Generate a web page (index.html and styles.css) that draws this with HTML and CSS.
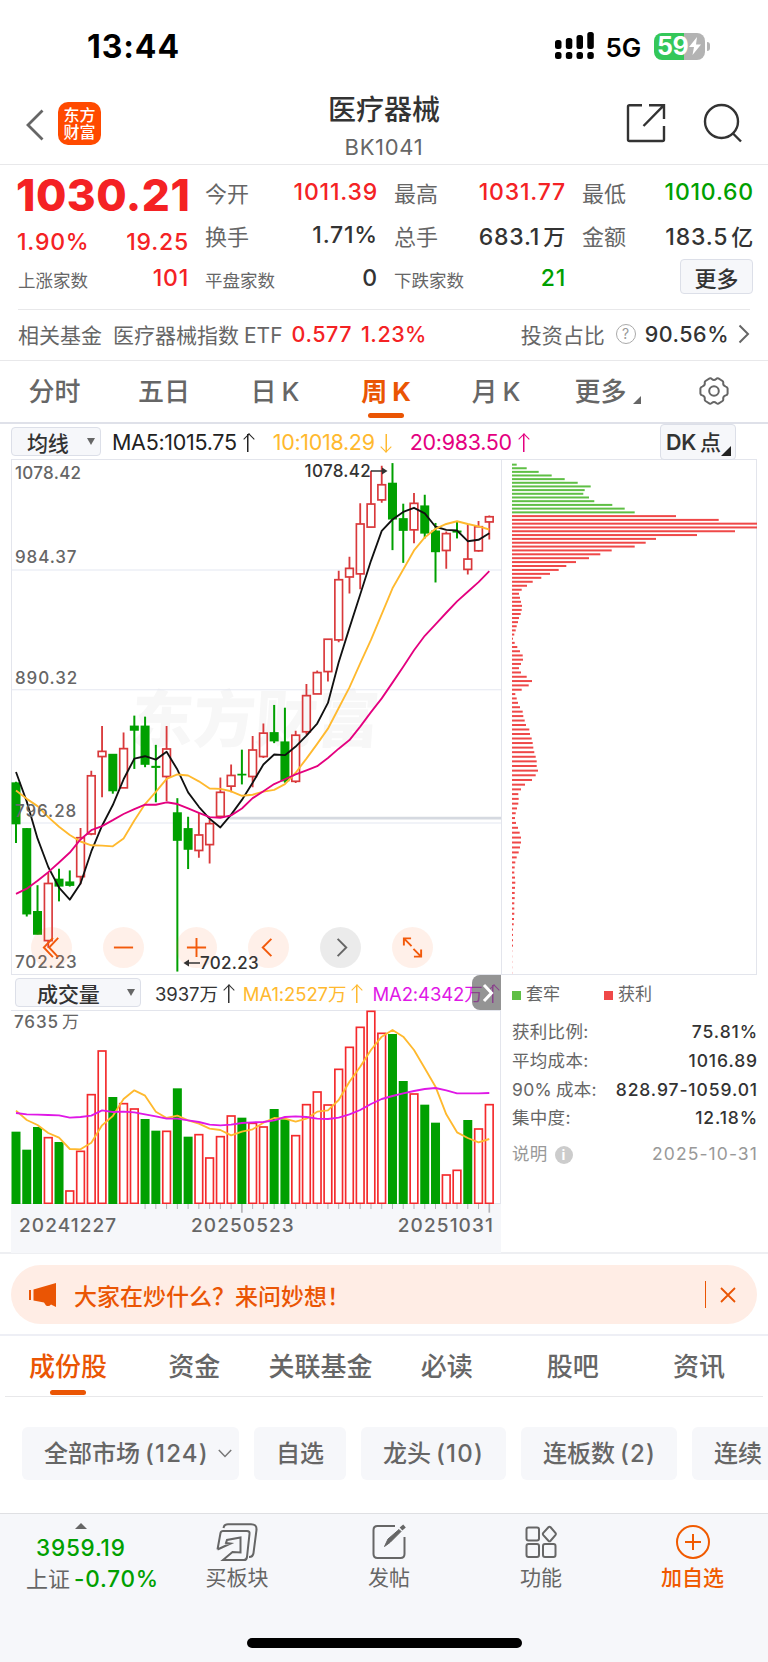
FILE: index.html
```html
<!DOCTYPE html>
<html lang="zh-CN">
<head>
    <meta charset="UTF-8">
    <meta name="viewport" content="width=device-width, initial-scale=1.0">
    <title>医疗器械 BK1041</title>
    <link rel="stylesheet" href="styles.css">
</head>
<body>
    <div class="status-bar">
        <span class="time">13:44</span>
        <div class="status-right">
            <svg class="signal" width="40" height="28" viewBox="0 0 40 28">
                <g fill="#000">
                    <rect x="0" y="8" width="6.500" height="9" rx="2.500"/>
                    <rect x="10.800" y="6" width="6.500" height="11" rx="2.500"/>
                    <rect x="21.500" y="3" width="6.500" height="14" rx="2.500"/>
                    <rect x="32.300" y="0" width="6.500" height="17" rx="2.500"/>
                    <rect x="0" y="20" width="6.500" height="7" rx="2.500"/>
                    <rect x="10.800" y="20" width="6.500" height="7" rx="2.500"/>
                    <rect x="21.500" y="20" width="6.500" height="7" rx="2.500"/>
                    <rect x="32.300" y="20" width="6.500" height="7" rx="2.500"/>
                </g>
            </svg>
            <span class="network">5G</span>
            <div class="battery">
                <span>59</span>
                <svg width="14" height="18" viewBox="0 0 14 18"><path d="M9 0L1 10h5L4.500 18L13 7.500H8z" fill="#fff"/></svg>
            </div>
            <i class="battery-cap"></i>
        </div>
    </div>

    <header class="header">
        <div class="header-left">
            <svg width="18" height="32" viewBox="0 0 18 32"><path d="M16.500 1.500L2 16l14.500 14.500" fill="none" stroke="#666" stroke-width="2.800"/></svg>
            <div class="logo">东方<br>财富</div>
        </div>
        <div class="header-title">
            <h1>医疗器械</h1>
            <p>BK1041</p>
        </div>
        <div class="header-right">
            <svg width="40" height="40" viewBox="0 0 40 40" fill="none" stroke="#333" stroke-width="2.400">
                <path d="M16 2.200H3.500a1.500 1.500 0 0 0-1.500 1.500V36.500a1.500 1.500 0 0 0 1.500 1.500H36.500a1.500 1.500 0 0 0 1.500-1.500V23"/>
                <path d="M23 2.200H38V16M38 2.200L17.500 23"/>
            </svg>
            <svg width="40" height="40" viewBox="0 0 40 40" fill="none" stroke="#333" stroke-width="2.400">
                <circle cx="18.500" cy="18.500" r="16.500"/>
                <path d="M30 30.500L38 38.500"/>
            </svg>
        </div>
    </header>

    <section class="quote">
        <div class="quote-col first">
            <div class="price">1030.21</div>
            <div class="quote-row change"><b class="red">1.90%</b><b class="red">19.25</b></div>
            <div class="quote-row small"><span>上涨家数</span><b class="red">101</b></div>
        </div>
        <div class="quote-col">
            <div class="quote-row"><span>今开</span><b class="red">1011.39</b></div>
            <div class="quote-row"><span>换手</span><b>1.71%</b></div>
            <div class="quote-row small"><span>平盘家数</span><b>0</b></div>
        </div>
        <div class="quote-col">
            <div class="quote-row"><span>最高</span><b class="red">1031.77</b></div>
            <div class="quote-row"><span>总手</span><b>683.1<em>万</em></b></div>
            <div class="quote-row small"><span>下跌家数</span><b class="green">21</b></div>
        </div>
        <div class="quote-col">
            <div class="quote-row"><span>最低</span><b class="green">1010.60</b></div>
            <div class="quote-row"><span>金额</span><b>183.5<em>亿</em></b></div>
            <div class="quote-row small"><button class="more-btn">更多</button></div>
        </div>
    </section>

    <section class="fund">
        <span class="fund-label">相关基金</span>
        <span class="fund-name">医疗器械指数<em>ETF</em></span>
        <b class="red">0.577</b>
        <b class="red">1.23%</b>
        <span class="fund-ratio">投资占比</span>
        <i class="help">?</i>
        <b class="ratio">90.56%</b>
        <svg width="12" height="20" viewBox="0 0 12 20"><path d="M1.500 1.500L10 10l-8.500 8.500" fill="none" stroke="#666" stroke-width="2"/></svg>
    </section>

    <nav class="period-tabs">
        <span>分时</span>
        <span>五日</span>
        <span>日<em>K</em></span>
        <span class="active">周<em>K</em></span>
        <span>月<em>K</em></span>
        <span class="has-more">更多</span>
        <svg width="30" height="28" viewBox="0 0 30 28" fill="none" stroke="#666" stroke-width="2">
            <path d="M10.500 1.500Q12 1 12.800 2Q15 4 17.200 2Q18 1 19.500 1.500L23.500 4Q24.500 4.800 24.200 6.200Q24 8.800 26.800 9.600Q28.400 10 28.600 11.500V16.500Q28.400 18 26.800 18.400Q24 19.200 24.200 21.800Q24.500 23.200 23.500 24L19.500 26.500Q18 27 17.200 26Q15 24 12.800 26Q12 27 10.500 26.500L6.500 24Q5.500 23.200 5.800 21.800Q6 19.200 3.200 18.400Q1.600 18 1.400 16.500V11.500Q1.600 10 3.200 9.600Q6 8.800 5.800 6.200Q5.500 4.800 6.500 4Z"/>
            <circle cx="15" cy="14" r="4.800"/>
        </svg>
    </nav>

    <div class="indicator-bar">
        <div class="select ma-select">均线</div>
        <span class="ma5">MA5:1015.75<i class="up"></i></span>
        <span class="ma10">10:1018.29<i class="down"></i></span>
        <span class="ma20">20:983.50<i class="up"></i></span>
        <div class="dk-btn">DK<em>点</em></div>
    </div>

    <section class="charts">
        <div class="main-col">
            <div class="kline">
                <div class="watermark">东方财富</div>
                <svg id="kline" width="490" height="515" viewBox="34 27 1470 1497" preserveAspectRatio="none"></svg>
                <span class="axis a1">1078.42</span>
                <span class="axis a2">984.37</span>
                <span class="axis a3">890.32</span>
                <span class="axis a4">796.28</span>
                <span class="axis a5">702.23</span>
                <span class="mark high">1078.42<svg width="17" height="10" viewBox="0 0 17 10"><path d="M0 5H13" stroke="#333" stroke-width="1.500"/><path d="M11 1.500L16.500 5L11 8.500z" fill="#333"/></svg></span>
                <div class="tools">
                    <i><svg viewBox="0 0 24 24"><path d="M13.500 2L4 12l9.500 10M19 2l-9.500 10L19 22"/></svg></i>
                    <i><svg viewBox="0 0 24 24"><path d="M2 12h20"/></svg></i>
                    <i><svg viewBox="0 0 24 24"><path d="M2 12h20M12 2v20"/></svg></i>
                    <i><svg viewBox="0 0 24 24"><path d="M15 3L6 12l9 9"/></svg></i>
                    <i class="gray"><svg viewBox="0 0 24 24"><path d="M9 3l9 9-9 9"/></svg></i>
                    <i><svg viewBox="0 0 24 24"><path d="M3 10V2.500h7.500M3 2.500l8 8M13.500 21.500H21V14M21 21.500l-8-8"/></svg></i>
                </div>
                <span class="mark low"><svg width="17" height="10" viewBox="0 0 17 10"><path d="M4 5H17" stroke="#333" stroke-width="1.500"/><path d="M6 1.500L.5 5L6 8.500z" fill="#333"/></svg>702.23</span>
            </div>
            <div class="volume-bar">
                <div class="select vol-select">成交量</div>
                <span class="vol">3937万<i class="up"></i></span>
                <span class="vol-ma1">MA1:2527万<i class="up"></i></span>
                <span class="vol-ma2">MA2:4342万<i class="up"></i></span>
                <div class="expand"><svg width="12" height="20" viewBox="0 0 12 20"><path d="M2 2l7.500 8L2 18" fill="none" stroke="#fff" stroke-width="3"/></svg></div>
            </div>
            <div class="volume">
                <svg id="volume" width="490" height="194" viewBox="34 330 1470 582"></svg>
                <span class="axis v1">7635<em>万</em></span>
            </div>
            <div class="dates">
                <svg id="ticks" width="490" height="10" viewBox="34 0 1470 30"></svg>
                <div class="date-row"><span>20241227</span><span>20250523</span><span>20251031</span></div>
            </div>
        </div>

        <div class="side-col">
            <div class="cost-chart"><svg id="cost" width="255" height="515" viewBox="0 0 255 515"></svg></div>
            <div class="legend"><span class="trapped">套牢</span><span class="profit">获利</span></div>
            <dl class="cost-info">
                <div><dt>获利比例:</dt><dd>75.81%</dd></div>
                <div><dt>平均成本:</dt><dd>1016.89</dd></div>
                <div><dt>90%<em>成本</em>:</dt><dd>828.97-1059.01</dd></div>
                <div><dt>集中度:</dt><dd>12.18%</dd></div>
                <div class="note"><dt>说明<i>i</i></dt><dd>2025-10-31</dd></div>
            </dl>
        </div>
    </section>

    <section class="banner-wrap">
        <div class="banner">
            <svg width="30" height="26" viewBox="0 0 30 26" fill="#ea5504">
                <rect x="0" y="8" width="2" height="10"/>
                <path d="M4.500 7.500L27 1V25L22 22.500Q20 25 17 23.500L15 20.500L4.500 18.500z"/>
            </svg>
            <span>大家在炒什么？来问妙想！</span>
            <i class="divider"></i>
            <svg class="close" width="16" height="16" viewBox="0 0 16 16"><path d="M1 1l14 14M15 1L1 15" stroke="#ea5504" stroke-width="1.800"/></svg>
        </div>
    </section>

    <nav class="section-tabs">
        <span class="active">成份股</span>
        <span>资金</span>
        <span>关联基金</span>
        <span>必读</span>
        <span>股吧</span>
        <span>资讯</span>
    </nav>

    <div class="filters">
        <div class="f-all">全部市场<em>(124)</em><svg width="14" height="9" viewBox="0 0 14 9"><path d="M.8 1L7 7.500L13.200 1" fill="none" stroke="#777" stroke-width="1.500"/></svg></div>
        <div class="f-own">自选</div>
        <div class="f-top">龙头<em>(10)</em></div>
        <div class="f-board">连板数<em>(2)</em></div>
        <div class="f-cont">连续</div>
    </div>

    <footer class="bottom-nav">
        <div class="nav-items">
            <div class="index-box">
                <i class="arrow-up"></i>
                <b class="green">3959.19</b>
                <span>上证<b class="green">-0.70%</b></span>
            </div>
            <div class="nav-item">
                <svg width="42" height="38" viewBox="0 0 42 38" fill="none" stroke="#666" stroke-width="2">
                    <path d="M7.500 5Q8 1.200 12 1.200H35Q41 1.200 40.500 7L37.500 30Q37 34 33 34"/>
                    <path d="M1.500 26.500L4.500 10Q5 8 7 8H31Q34 8 33.500 11L31 34Q30.600 37 28 37H7L16.500 29L24.500 29.500V14.500L11 17L10 20L14.500 20.500L1.500 26.500"/>
                </svg>
                <span>买板块</span>
            </div>
            <div class="nav-item">
                <svg width="34" height="36" viewBox="0 0 34 36" fill="none" stroke="#666" stroke-width="2">
                    <path d="M23 2H5.500Q1.500 2 1.500 6V30Q1.500 34 5.500 34H28.500Q32.500 34 32.500 30V13"/>
                    <path d="M12.500 22.500L16 15L27 5.500L29 7.500L18 18.500z" fill="#666" stroke-width="1"/>
                    <path d="M29 5L32.500 2" stroke-width="4"/>
                </svg>
                <span>发帖</span>
            </div>
            <div class="nav-item">
                <svg width="32" height="34" viewBox="0 0 32 34" fill="none" stroke="#666" stroke-width="2">
                    <rect x="1.500" y="2.500" width="12.500" height="13" rx="2"/>
                    <rect x="1.500" y="19" width="12.500" height="13" rx="2"/>
                    <rect x="18" y="19" width="12.500" height="13" rx="2"/>
                    <path d="M23.400 2.300Q24.500 1.200 25.600 2.300L30.400 7.900Q31.300 9 30.400 10.100L25.600 15.700Q24.500 16.800 23.400 15.700L18.300 10.100Q17.400 9 18.300 7.900z"/>
                </svg>
                <span>功能</span>
            </div>
            <div class="nav-item add">
                <svg width="36" height="36" viewBox="0 0 36 36" fill="none" stroke="#f05a00" stroke-width="2">
                    <circle cx="18" cy="18" r="16"/>
                    <path d="M10 18H26M18 10V26"/>
                </svg>
                <span>加自选</span>
            </div>
        </div>
        <div class="home-bar"></div>
    </footer>

    <script src="charts.js"></script>
</body>
</html>
```

FILE: styles.css
```css
* {
    box-sizing: border-box;
    margin: 0;
    padding: 0;
}
body {
    width: 768px;
    height: 1662px;
    overflow: hidden;
    background: #fff;
    color: #666;
    font-family: Inter, "Noto Sans CJK SC", sans-serif;
}
svg {
    display: block;
    flex: none;
}
em, i {
    font-style: normal;
}
b {
    font-weight: 500;
    color: #333;
}
.red {
    color: #f42224;
}
.green {
    color: #00a000;
}

/* status bar */
.status-bar {
    height: 90px;
    padding: 2px 58px 0 87px;
    display: flex;
    justify-content: space-between;
    align-items: center;
    color: #000;
}
.time {
    font-size: 32px;
    font-weight: 700;
    letter-spacing: 0.9px;
}
.status-right {
    display: flex;
    align-items: center;
}
.network {
    font-size: 26px;
    font-weight: 600;
    letter-spacing: -0.2px;
    margin: 3px 13px 0 11px;
}
.battery {
    width: 51px;
    height: 27px;
    border-radius: 8px;
    background: linear-gradient(90deg, #34c759 30px, #b3b3b3 30px);
    display: flex;
    align-items: center;
    padding-left: 3px;
    color: #fff;
    font-size: 25px;
    font-weight: 700;
    letter-spacing: -0.5px;
}
.battery-cap {
    width: 3px;
    height: 9px;
    margin-left: 2px;
    border-radius: 0 3px 3px 0;
    background: #b3b3b3;
}

/* header */
.header {
    height: 75px;
    display: grid;
    grid-template-columns: 1fr 200px 1fr;
    border-bottom: 1px solid #e8e8ea;
}
.header-left {
    display: flex;
    align-items: center;
    gap: 14px;
    padding: 0 0 7px 26px;
}
.header-left svg {
    margin-top: 2px;
}
.logo {
    width: 43px;
    height: 43px;
    padding-top: 5px;
    border-radius: 10px;
    background: #ff4a00;
    color: #fff;
    font-size: 16px;
    line-height: 17px;
    font-weight: 500;
    text-align: center;
}
.header-title {
    padding-top: 1px;
    text-align: center;
}
.header-title h1 {
    font-size: 28px;
    line-height: 38px;
    font-weight: 500;
    color: #333;
}
.header-title p {
    font-size: 22px;
    line-height: 28px;
    margin-top: 4px;
    letter-spacing: 0.7px;
}
.header-right {
    display: flex;
    justify-content: flex-end;
    gap: 37px;
    padding: 13px 25px 0 0;
}

/* quote */
.quote {
    height: 144px;
    margin: 0 15px 0 18px;
    padding-top: 5px;
    display: grid;
    grid-template-columns: 170px 172px 171px 171px;
    column-gap: 17px;
}
.quote-row {
    height: 43px;
    display: flex;
    justify-content: space-between;
    align-items: center;
    font-size: 22px;
}
.quote-row b {
    margin-right: -1px;
    font-size: 23px;
    letter-spacing: 0.8px;
}
.quote-row b em {
    margin-left: 3px;
    font-size: 22px;
}
.quote-row.small span {
    font-size: 17.500px;
    padding-top: 4px;
}
.price {
    height: 50px;
    margin-left: -2px;
    line-height: 50px;
    font-size: 44px;
    font-weight: 800;
    letter-spacing: 0.5px;
    color: #f42224;
}
.quote-row.change {
    height: 36px;
    margin-left: -1px;
    padding-top: 8px;
}
.more-btn {
    width: 73px;
    height: 35px;
    margin: -2px 0 0 auto;
    border: 1px solid #dcdfe8;
    border-radius: 4px;
    background: #f6f7fa;
    color: #333;
    font: 500 22px/30px "Noto Sans CJK SC", sans-serif;
}
.fund {
    height: 51px;
    margin: 0 18px;
    padding-bottom: 2px;
    border-top: 1px solid #e8e8ea;
    display: flex;
    align-items: center;
    font-size: 21px;
}
.fund b {
    margin-left: 9px;
    font-size: 21.500px;
    letter-spacing: 0.5px;
}
.fund-name {
    margin-left: 11px;
}
.fund-name em {
    margin-left: 5px;
}
.fund-ratio {
    margin-left: auto;
}
.help {
    width: 20px;
    height: 20px;
    margin-left: 11px;
    border: 1.500px solid #aaa;
    border-radius: 50%;
    color: #999;
    font-size: 14px;
    line-height: 17px;
    text-align: center;
}
.fund svg {
    margin-left: 9px;
}

/* period tabs */
.period-tabs {
    height: 64px;
    border-top: 1px solid #e8e8ea;
    border-bottom: 2px solid #dfe1e9;
    display: grid;
    grid-template-columns: 109px 110px 112px 110px 110px 99px 1fr;
    font-size: 26px;
    line-height: 61px;
    text-align: center;
}
.period-tabs span {
    position: relative;
    font-weight: 500;
}
.period-tabs em {
    margin-left: 5px;
}
.period-tabs svg {
    margin: 16px auto 0 49px;
}
.active {
    color: #ea5504;
}
.active::after {
    content: "";
    position: absolute;
    left: calc(50% - 18px);
    bottom: 4px;
    width: 36px;
    height: 5px;
    border-radius: 3px;
    background: #ea5504;
}
.period-tabs .active {
    font-weight: 700;
}
.has-more::after {
    content: "";
    position: absolute;
    right: 9px;
    bottom: 18px;
    border-left: 8px solid transparent;
    border-bottom: 8px solid #666;
}

/* indicators */
.indicator-bar {
    height: 35px;
    padding: 0 32px 0 11px;
    display: flex;
    align-items: center;
    font-size: 21.500px;
    letter-spacing: -0.3px;
}
.select {
    display: flex;
    align-items: center;
    justify-content: space-between;
    height: 29px;
    border: 1px solid #dcdfe8;
    border-radius: 4px;
    background: #f6f7fa;
    color: #333;
    font-size: 21px;
    font-weight: 500;
}
.select::after {
    content: "";
    border: 4px solid transparent;
    border-top: 7px solid #666;
    border-bottom: 0;
}
.ma-select {
    width: 90px;
    margin-right: 11px;
    padding: 0 5px 0 15px;
}
.ma5 {
    color: #222;
}
.ma10 {
    color: #ffb92e;
    margin-left: 20px;
}
.ma20 {
    color: #e4007f;
    margin-left: 19px;
}
.up, .down {
    position: relative;
    display: inline-block;
    width: 9px;
    height: 18px;
    margin-left: 7px;
    background: linear-gradient(currentColor, currentColor) 50% 0 / 1.500px 100% no-repeat;
    vertical-align: -2px;
}
.up::before, .down::before {
    content: "";
    position: absolute;
    left: 1px;
    top: 1px;
    width: 7px;
    height: 7px;
    border: solid currentColor;
    border-width: 1.500px 0 0 1.500px;
    transform: rotate(45deg);
}
.down {
    transform: rotate(180deg);
}
.dk-btn {
    position: relative;
    width: 76px;
    height: 36px;
    margin-left: auto;
    padding-left: 5px;
    border: 1px solid #dcdfe8;
    border-radius: 4px;
    background: #f6f7fa;
    color: #333;
    font-weight: 600;
    line-height: 34px;
}
.dk-btn em {
    margin-left: 4px;
    font-size: 21px;
    font-weight: 500;
}
.dk-btn::after {
    content: "";
    position: absolute;
    right: 4px;
    bottom: 3px;
    border-left: 10px solid transparent;
    border-bottom: 10px solid #222;
}

/* charts */
.charts {
    height: 795px;
    padding-left: 11px;
    display: flex;
    border-bottom: 2px solid #eeeff2;
}
.main-col {
    width: 490px;
}
.kline {
    position: relative;
    height: 516px;
    border: solid #e3e5ec;
    border-width: 1px 0 1px 1px;
}
.kline > svg {
    position: absolute;
    left: -1px;
    top: 0;
}
.watermark {
    position: absolute;
    left: 120px;
    top: 210px;
    font-size: 62px;
    font-weight: 900;
    color: #f7f7f7;
    transform: skewX(-4deg);
}
.axis {
    position: absolute;
    left: 3px;
    font-size: 17px;
    font-weight: 500;
    line-height: 20px;
    letter-spacing: 0.9px;
}
.a1 {
    top: 3px;
    letter-spacing: 0.3px;
}
.a2 { top: 87px; }
.a3 { top: 208px; }
.a4 { top: 341px; }
.a5 { top: 492px; }
.v1 { top: 1px; }
.v1 em {
    margin-left: 3px;
    font-weight: 400;
}
.mark {
    position: absolute;
    display: flex;
    align-items: center;
    font-size: 17px;
    font-weight: 500;
    line-height: 20px;
    letter-spacing: 0.3px;
    color: #333;
}
.high {
    right: 113px;
    top: 1px;
}
.low {
    left: 171px;
    top: 493px;
}
.tools {
    position: absolute;
    left: 19px;
    top: 467px;
    display: flex;
    gap: 31.300px;
}
.tools i {
    width: 41px;
    height: 41px;
    padding: 9px;
    border-radius: 50%;
    background: rgba(255, 108, 40, 0.1);
}
.tools .gray {
    background: rgba(0, 0, 0, 0.08);
}
.tools svg {
    fill: none;
    stroke: #f25a0c;
    stroke-width: 2;
}
.tools .gray svg {
    stroke: #666;
}
.volume-bar {
    position: relative;
    height: 35px;
    padding-left: 4px;
    display: flex;
    align-items: center;
    overflow: hidden;
    white-space: nowrap;
    font-size: 18.500px;
    letter-spacing: -0.1px;
}
.vol-select {
    width: 126px;
    margin-right: 14px;
    padding: 0 5px 0 21px;
    flex: none;
}
.vol {
    color: #333;
}
.vol-ma1 {
    color: #ffb92e;
    margin-left: 10px;
}
.vol-ma2 {
    color: #df18e6;
    margin-left: 11px;
}
.volume-bar .up {
    margin-left: 6px;
}
.expand {
    position: absolute;
    right: 0;
    top: 0;
    width: 29px;
    height: 35px;
    padding: 8px 0 0 10px;
    border-radius: 8px 0 0 8px;
    background: rgba(90, 90, 90, 0.65);
}
.volume {
    position: relative;
    height: 194px;
    border: 1px solid #e3e5ec;
    border-left: 0;
}
.volume svg {
    margin-top: -1px;
}
.dates {
    height: 49px;
    background: #f6f7fa;
}
.date-row {
    display: grid;
    grid-template-columns: 172px 1fr auto;
    padding: 0 7px 0 8px;
    font-size: 19px;
    font-weight: 500;
    line-height: 24px;
    letter-spacing: 1.100px;
}
.side-col {
    width: 256px;
}
.cost-chart {
    height: 516px;
    border: 1px solid #e3e5ec;
}
.legend {
    display: flex;
    gap: 44px;
    padding: 6px 0 0 11px;
    font-size: 17px;
    line-height: 26px;
}
.legend span::before {
    content: "";
    display: inline-block;
    width: 9px;
    height: 9px;
    margin-right: 5px;
    background: #5fbf45;
}
.legend .profit::before {
    background: #ef4848;
}
.cost-info {
    padding: 11px 0 0 11px;
    font-size: 17.500px;
}
.cost-info div {
    display: flex;
    justify-content: space-between;
    height: 28.800px;
    line-height: 28.800px;
    white-space: nowrap;
}
.cost-info dt {
    letter-spacing: 0.3px;
}
.cost-info em {
    margin-left: 4px;
}
.cost-info dd {
    margin-right: -1px;
    font-weight: 500;
    color: #333;
    letter-spacing: 0.9px;
}
.cost-info .note {
    margin-top: 7px;
    color: #999;
}
.cost-info .note dd {
    color: #999;
    font-weight: 400;
    letter-spacing: 1.100px;
}
.note i {
    display: inline-block;
    width: 18px;
    height: 18px;
    margin-left: 7px;
    border-radius: 50%;
    background: #ccc;
    color: #fff;
    font-size: 14px;
    font-weight: 700;
    line-height: 18px;
    text-align: center;
}

/* banner */
.banner-wrap {
    height: 82px;
    padding: 11px;
    border-bottom: 2px solid #eeeff5;
}
.banner {
    height: 59px;
    padding: 0 21px 0 18px;
    display: flex;
    align-items: center;
    border-radius: 30px;
    background: #ffede5;
    color: #ea5504;
    font-size: 23px;
    font-weight: 500;
}
.banner span {
    margin-left: 15px;
}
.divider {
    width: 1.500px;
    height: 27px;
    margin-left: auto;
    background: #ea5504;
}
.close {
    margin-left: 14px;
}

/* section tabs */
.section-tabs {
    height: 61px;
    margin: 0 5px;
    display: grid;
    grid-template-columns: repeat(6, 126.200px);
    border-bottom: 1px solid #e8e8ea;
    font-size: 26px;
    font-weight: 500;
    line-height: 62px;
    text-align: center;
}
.section-tabs span {
    position: relative;
}
.section-tabs .active::after {
    bottom: 3px;
}

/* filters */
.filters {
    height: 116px;
    padding: 30px 0 0 22px;
    display: flex;
    gap: 15px;
    overflow: hidden;
    font-size: 24px;
    font-weight: 500;
    line-height: 53px;
    white-space: nowrap;
}
.filters div {
    flex: none;
    height: 53px;
    padding: 0 22px;
    border-radius: 6px;
    background: #f6f7fa;
}
.filters em {
    margin-left: 5px;
    letter-spacing: 1.200px;
}
.filters .f-all {
    width: 217px;
    padding-right: 7px;
    display: flex;
    align-items: center;
}
.f-all svg {
    margin-left: auto;
}
.f-own { width: 92px; }
.f-top { width: 145px; }
.f-board { width: 156px; }
.f-cont { width: 120px; }

/* bottom nav */
.bottom-nav {
    height: 149px;
    border-top: 1px solid #dfe0e3;
    background: #f6f7fa;
}
.nav-items {
    height: 124px;
    display: grid;
    grid-template-columns: 161px 152px 152px 152px 151px;
    text-align: center;
    font-size: 21px;
}
.index-box {
    padding: 9px 0 0 26px;
    display: flex;
    flex-direction: column;
    align-items: flex-start;
    font-size: 22px;
    white-space: nowrap;
}
.arrow-up {
    margin-left: 49px;
    border: 6px solid transparent;
    border-top: 0;
    border-bottom: 6px solid #666;
}
.index-box b {
    font-size: 22.500px;
    line-height: 30px;
    letter-spacing: 0.8px;
}
.index-box > b {
    margin: 4px 0 0 10px;
}
.index-box span {
    line-height: 32px;
}
.index-box span b {
    margin-left: 4px;
}
.nav-item {
    display: flex;
    flex-direction: column;
    align-items: center;
}
.nav-item svg {
    height: 38px;
    margin-top: 9px;
}
.nav-item span {
    line-height: 34px;
}
.add {
    color: #f05a00;
    font-weight: 500;
}
.home-bar {
    width: 275px;
    height: 10px;
    margin: 0 auto;
    border-radius: 5px;
    background: #000;
}
```

FILE: charts.js
```js
const STEP = 32.27;
const START = 49;
const RED = '#d9393b';
const GREEN = '#00a000';

// [color, high, top, bottom, low]
const candles = [
    ['g', 962, 965, 1085, 1140], ['g', 1097, 1098, 1347, 1354], ['g', 1263, 1339, 1406, 1406],
    ['r', 1225, 1258, 1424, 1445], ['g', 1215, 1245, 1266, 1310], ['g', 1220, 1253, 1264, 1267],
    ['r', 1097, 1125, 1238, 1260], ['r', 930, 945, 1114, 1118], ['r', 800, 874, 889, 1007],
    ['g', 882, 882, 989, 997], ['r', 819, 866, 980, 980], ['g', 770, 800, 813, 925],
    ['g', 773, 800, 912, 920], ['g', 855, 917, 921, 1022], ['r', 800, 867, 947, 1018],
    ['g', 1010, 1052, 1133, 1514], ['g', 1064, 1098, 1159, 1216], ['r', 1052, 1117, 1162, 1183],
    ['r', 1073, 1084, 1145, 1200], ['r', 950, 993, 1063, 1063], ['r', 912, 944, 975, 993],
    ['g', 869, 940, 943, 970], ['r', 829, 870, 947, 978], ['r', 793, 821, 889, 893],
    ['g', 739, 819, 844, 850], ['g', 747, 846, 960, 965], ['r', 814, 827, 961, 966],
    ['r', 678, 712, 817, 825], ['r', 639, 645, 707, 707], ['r', 548, 548, 642, 671],
    ['r', 349, 375, 550, 557], ['r', 308, 342, 367, 415], ['r', 153, 213, 358, 403],
    ['r', 58, 155, 222, 222], ['r', 44, 99, 143, 151], ['g', 36, 94, 199, 289],
    ['g', 154, 197, 232, 326], ['r', 123, 153, 230, 269], ['g', 128, 160, 240, 255],
    ['g', 210, 233, 294, 383], ['r', 235, 241, 290, 343], ['g', 205, 233, 237, 255],
    ['r', 213, 315, 345, 360], ['r', 204, 221, 291, 294], ['r', 188, 192, 207, 258]
];
const ma5 = [934, 1020, 1127, 1210, 1270, 1305, 1258, 1165, 1090, 1030, 955, 895, 888, 898, 875, 927, 993, 1035, 1070, 1095, 1058, 1015, 965, 912, 883, 885, 860, 828, 793, 733, 615, 515, 418, 320, 233, 200, 178, 166, 182, 221, 230, 232, 263, 259, 240];
const ma10 = [988, 1012, 1033, 1065, 1093, 1117, 1136, 1147, 1148, 1150, 1127, 1075, 1027, 992, 954, 941, 944, 961, 982, 983, 990, 1003, 1000, 991, 986, 969, 936, 895, 852, 808, 748, 688, 618, 550, 475, 400, 345, 290, 252, 227, 213, 205, 213, 220, 229];
const ma20 = [1288, 1273, 1250, 1225, 1197, 1168, 1130, 1103, 1091, 1074, 1056, 1042, 1029, 1029, 1022, 1027, 1040, 1053, 1065, 1067, 1060, 1040, 1010, 990, 969, 955, 941, 929, 917, 893, 866, 841, 802, 760, 720, 674, 628, 580, 538, 505, 471, 438, 410, 382, 350];

// volume bar tops
const volumes = [695, 749, 681, 711, 726, 871, 752, 582, 451, 591, 609, 625, 657, 692, 692, 565, 710, 702, 772, 708, 646, 653, 668, 679, 627, 658, 705, 612, 574, 613, 506, 440, 380, 332, 398, 402, 543, 580, 614, 668, 823, 809, 660, 685, 612];
const volumeColors = 'gggrgrrrrgrrggrggrrrrgrrggrrrrrrrrrggrggrrgrr';
const vma1 = [632, 660, 675, 699, 713, 747, 748, 728, 676, 648, 597, 571, 587, 635, 654, 647, 661, 671, 686, 690, 706, 695, 688, 668, 654, 656, 665, 656, 635, 631, 600, 545, 500, 450, 410, 390, 410, 450, 505, 560, 643, 697, 714, 727, 717];
const vma2 = [639, 643, 644, 645, 646, 653, 651, 647, 631, 636, 635, 637, 643, 649, 656, 656, 661, 666, 674, 676, 674, 669, 667, 666, 661, 651, 649, 651, 656, 657, 653, 643, 630, 612, 597, 588, 580, 573, 567, 564, 571, 580, 580, 580, 579];

// chip distribution, from the highest price down
const chips = [14, 44, 80, 119, 158, 197, 236, 218, 214, 231, 247, 301, 338, 368,
    492, 620, 735, 735, 669, 555, 432, 401, 368, 299, 265, 231, 192, 163, 140, 114, 88, 62, 45, 29, 21, 24, 27, 30, 29, 26, 21, 18, 14, 11, 7, 3, 8, 16, 24, 32, 33, 27, 21, 27, 44, 60, 50, 29, 10, 14, 18, 24, 32, 34,
    38, 42, 52, 54, 59, 62, 64, 67, 71, 74, 74, 78, 71, 60, 39, 27, 19, 20, 19, 15, 11, 9, 12, 18, 23, 27, 27, 24, 20, 14, 10, 8, 7, 9, 10, 9, 8, 8, 7, 7, 7, 6, 5, 3, 3, 3, 3, 2, 2, 2, 2, 2];

const x = i => START + i * STEP;

function line(values, color) {
    const points = values.map((v, i) => `${x(i).toFixed(1)},${v}`).join(' ');
    return `<polyline points="${points}" fill="none" stroke="${color}" stroke-width="5.5" stroke-linejoin="round"/>`;
}

function drawKline() {
    let html = '';
    [347, 695, 1082].forEach(y => {
        html += `<path d="M34 ${y}H1504" stroke="#e4e7f1" stroke-width="3"/>`;
    });
    html += '<path d="M690 1068H1504" stroke="#d5d9e0" stroke-width="8"/>';
    candles.forEach(([c, high, top, bottom, low], i) => {
        const cx = x(i);
        if (c === 'g') {
            html += `<path d="M${cx} ${high}V${low}" stroke="${GREEN}" stroke-width="6"/>`;
            html += `<rect x="${cx - 13.5}" y="${top - 1}" width="27" height="${bottom - top + 2}" fill="${GREEN}"/>`;
        } else {
            html += `<path d="M${cx} ${high}V${top}M${cx} ${bottom}V${low}" stroke="${RED}" stroke-width="5.5"/>`;
            html += `<rect x="${cx - 11.5}" y="${top}" width="23" height="${bottom - top}" fill="none" stroke="${RED}" stroke-width="5"/>`;
        }
    });
    html += line(ma5, '#111') + line(ma10, '#ffb92e') + line(ma20, '#e4007f');
    document.getElementById('kline').innerHTML = html;
}

function drawVolume() {
    let html = '';
    volumes.forEach((top, i) => {
        const cx = x(i);
        if (volumeColors[i] === 'g') {
            html += `<rect x="${cx - 13.5}" y="${top}" width="27" height="${912 - top}" fill="${GREEN}"/>`;
        } else {
            html += `<rect x="${cx - 11.5}" y="${top + 2}" width="23" height="${908 - top}" fill="none" stroke="#f42a2c" stroke-width="5"/>`;
        }
    });
    html += line(vma1, '#ffb92e') + line(vma2, '#df18e6');
    document.getElementById('volume').innerHTML = html;

    let ticks = '';
    for (let i = 12; i < 45; i++) {
        const big = i === 21 || i === 44;
        ticks += `<path d="M${x(i)} 0V${big ? 26 : 15}" stroke="#b4b4b8" stroke-width="${big ? 5 : 3}"/>`;
    }
    document.getElementById('ticks').innerHTML = ticks;
}

function drawCost() {
    let html = '';
    chips.forEach((w, i) => {
        const price = 1074.8 - i * 3.242;
        const y = 109.5 + 1193 * Math.log(984.37 / price);
        const color = i < 14 ? '#5fbf45' : '#ef4848';
        const opacity = i > 110 ? 0.3 : 1;
        html += `<rect x="10" y="${(y - 1).toFixed(2)}" width="${(w / 3).toFixed(1)}" height="2" fill="${color}" opacity="${opacity}"/>`;
    });
    document.getElementById('cost').innerHTML = html;
}

drawKline();
drawVolume();
drawCost();
```
